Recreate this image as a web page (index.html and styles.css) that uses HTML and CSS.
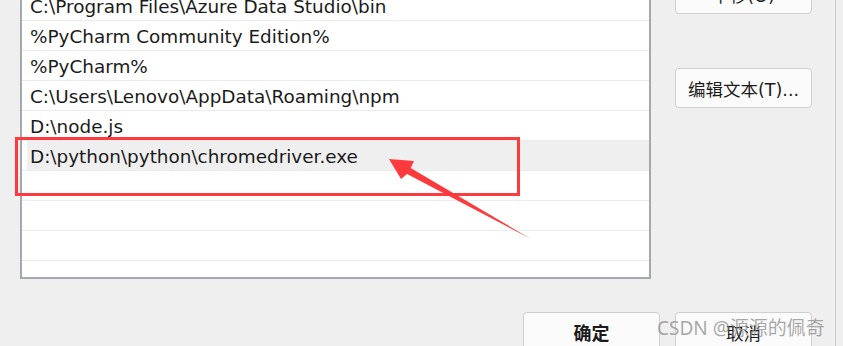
FILE: index.html
```html
<!DOCTYPE html>
<html lang="zh-CN">
<head>
    <meta charset="UTF-8">
    <meta name="viewport" content="width=device-width, initial-scale=1.0">
    <title>编辑环境变量</title>
    <link rel="stylesheet" href="styles.css">
</head>
<body>
<div class="dialog">
    <div class="main">
        <!-- Path list -->
        <div class="path-list">
            <div class="row"><span class="cell">C:\Program Files\Azure Data Studio\bin</span></div>
            <div class="row"><span class="cell">%PyCharm Community Edition%</span></div>
            <div class="row"><span class="cell">%PyCharm%</span></div>
            <div class="row"><span class="cell">C:\Users\Lenovo\AppData\Roaming\npm</span></div>
            <div class="row"><span class="cell">D:\node.js</span></div>
            <div class="row selected"><span class="cell">D:\python\python\chromedriver.exe</span></div>
            <div class="row"><span class="cell"></span></div>
            <div class="row"><span class="cell"></span></div>
            <div class="row"><span class="cell"></span></div>
        </div>

        <!-- Side buttons -->
        <div class="side">
            <button class="btn">下移(O)</button>
            <button class="btn">编辑文本(T)...</button>
        </div>
    </div>

    <div class="footer">
        <button class="btn btn-default">确定</button>
        <button class="btn">取消</button>
    </div>

    <!-- Red annotation: box around the new entry and an arrow pointing at it -->
    <svg class="annotation" width="836" height="346" viewBox="0 0 836 346">
        <rect x="16.5" y="138.5" width="502" height="56" fill="none" stroke="#fd3b3e" stroke-width="3"/>
        <polygon points="389,159 414,161 410.7,168 531,239 407,174 401,179" fill="#fd3b3e"/>
    </svg>

    <div class="watermark">CSDN @源源的佩奇</div>
</div>
</body>
</html>
```

FILE: styles.css
```css
body {
    margin: 0;
    width: 843px;
    height: 346px;
    overflow: hidden;
    background-color: #efefef;
    font-family: "DejaVu Sans", "Noto Sans CJK SC", sans-serif;
    color: #1b1b1b;
}

.dialog {
    position: relative;
    width: 836px;
    height: 346px;
    box-sizing: border-box;
    border-right: 1px solid #cbcbcb;
    overflow: hidden;
}

.main {
    display: flex;
    align-items: flex-start;
    margin-top: -11px;
}

.path-list {
    margin-left: 20px;
    width: 627px;
    height: 286px;
    border: 2px solid #a4a7ab;
    background-color: #fff;
}

.row {
    height: 29px;
    border-bottom: 1px solid #ececec;
    display: flex;
}

.cell {
    flex: 1;
    margin-left: 5px;
    padding-left: 3px;
    font-size: 18.4px;
    line-height: 31px;
    white-space: nowrap;
}

.row.selected .cell {
    background-color: #efefef;
}

.side {
    display: flex;
    flex-direction: column;
    gap: 54px;
    margin-top: -15px;
    padding-left: 24px;
}

.btn {
    width: 137px;
    height: 40px;
    border: 1px solid #cfcfcf;
    border-radius: 4px;
    background-color: #fbfbfb;
    font-family: "DejaVu Sans", "Noto Sans CJK SC", sans-serif;
    font-size: 17.5px;
    color: #1b1b1b;
    padding: 0;
}

.btn-default {
    font-size: 18px;
    font-weight: bold;
}

.footer {
    display: flex;
    justify-content: flex-end;
    gap: 15px;
    margin-top: 33px;
    padding-right: 23px;
}

.annotation {
    position: absolute;
    left: 0;
    top: 0;
    pointer-events: none;
}

.watermark {
    position: absolute;
    left: 657px;
    top: 313px;
    font-family: "Noto Sans", "Noto Sans CJK SC", sans-serif;
    font-size: 19px;
    color: rgba(140, 140, 140, 0.75);
    white-space: nowrap;
}
```
